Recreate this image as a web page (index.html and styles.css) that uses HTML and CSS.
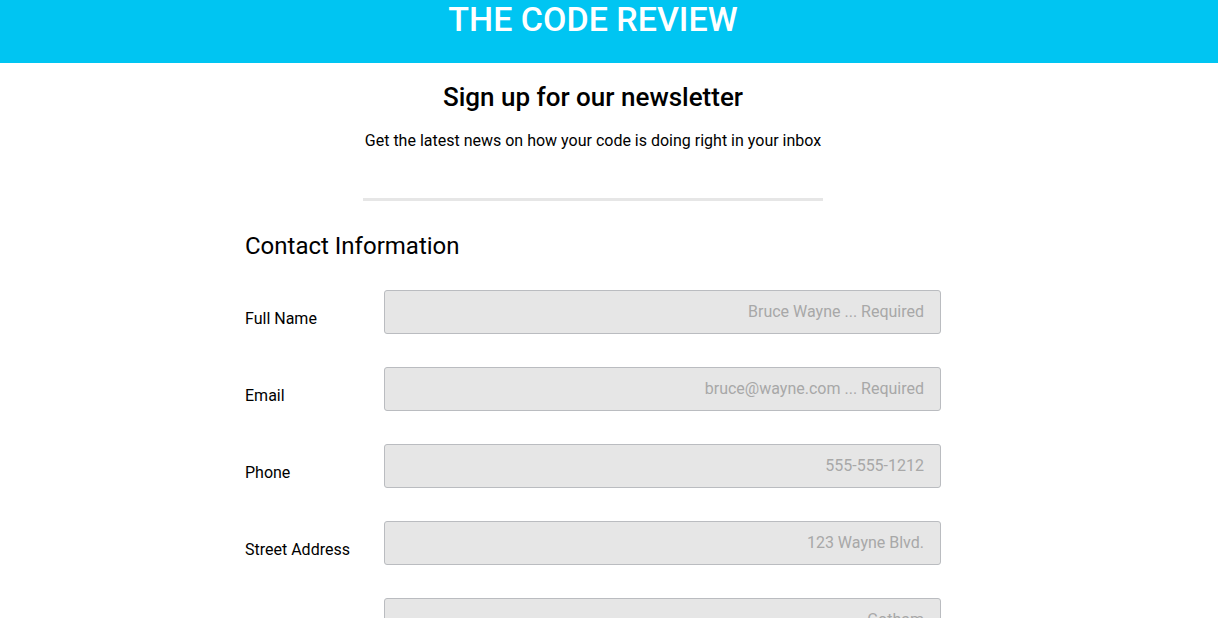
FILE: index.html
```html
<!DOCTYPE html>
<html>
<head>
<meta charset="utf-8">
<link rel="stylesheet" href="styles.css">
</head>
<body>
<header class="top">
  <h1 class="brand">THE CODE REVIEW</h1>
</header>
<main class="page">
  <section class="intro">
    <h2 class="intro-title">Sign up for our newsletter</h2>
    <p class="intro-text">Get the latest news on how your code is doing right in your inbox</p>
    <hr class="divider">
  </section>
  <form class="form">
    <h3 class="form-title">Contact Information</h3>
    <div class="row">
      <label class="label">Full Name</label>
      <input class="field" type="text" placeholder="Bruce Wayne ... Required">
    </div>
    <div class="row">
      <label class="label">Email</label>
      <input class="field" type="text" placeholder="bruce@wayne.com ... Required">
    </div>
    <div class="row">
      <label class="label">Phone</label>
      <input class="field" type="text" placeholder="555-555-1212">
    </div>
    <div class="row">
      <label class="label">Street Address</label>
      <input class="field" type="text" placeholder="123 Wayne Blvd.">
    </div>
    <div class="row">
      <label class="label">City</label>
      <input class="field" type="text" placeholder="Gotham">
    </div>
  </form>
</main>
</body>
</html>
```
FILE: styles.css
```css
html, body {
  margin: 0;
  padding: 0;
  background: #ffffff;
  font-family: Roboto, "Liberation Sans", sans-serif;
  color: #000;
  overflow: hidden;
}
.top {
  background: #00c5f2;
  height: 63px;
  padding-right: 32px;
  display: flex;
  justify-content: center;
}
.brand {
  margin: 0;
  color: #fff;
  font-size: 34px;
  font-weight: 500;
  line-height: 38px;
}
.page {
  padding-right: 32px;
  display: flex;
  flex-direction: column;
  align-items: center;
}
.intro {
  display: flex;
  flex-direction: column;
  align-items: center;
}
.intro-title {
  margin: 19px 0 0;
  font-size: 26px;
  font-weight: 500;
  line-height: 30px;
}
.intro-text {
  margin: 19px 0 0;
  font-size: 16px;
  line-height: 20px;
}
.divider {
  width: 460px;
  height: 3px;
  border: 0;
  background: #e6e6e6;
  margin: 47px 0 0;
}
.form {
  width: 696px;
  margin-top: 30px;
}
.form-title {
  margin: 0 0 29px;
  font-size: 24px;
  font-weight: 400;
  line-height: 30px;
}
.row {
  display: flex;
  align-items: flex-end;
  margin-bottom: 33px;
}
.label {
  width: 139px;
  font-size: 16px;
  line-height: 20px;
  padding-bottom: 5px;
}
.field {
  width: 557px;
  height: 44px;
  box-sizing: border-box;
  background: #e6e6e6;
  border: 1px solid #babcc0;
  border-radius: 3px;
  padding: 0 16px 2px;
  text-align: right;
  font-family: Roboto, "Liberation Sans", sans-serif;
  font-size: 16px;
  margin: 0;
}
.field::placeholder {
  color: #a8a8a8;
}
```
